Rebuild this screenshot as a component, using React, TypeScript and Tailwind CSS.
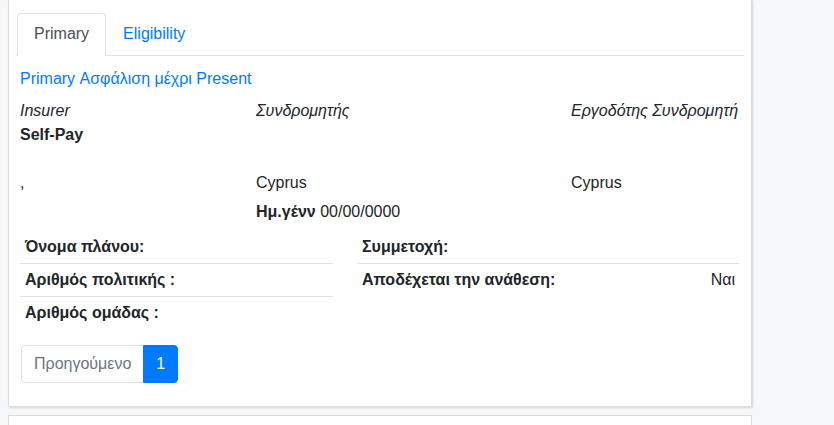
import React from 'react'

const leftRows = ['Όνομα πλάνου:', 'Αριθμός πολιτικής :', 'Αριθμός ομάδας :']
const rightRows: { label: string; value?: string }[] = [
  { label: 'Συμμετοχή:' },
  { label: 'Αποδέχεται την ανάθεση:', value: 'Ναι' },
]

export default function App() {
  return (
    <div
      className="min-h-[425px] bg-[#f7f8fa] pl-2 pr-[82px] text-base text-[#212529]"
      style={{ fontFamily: '"Liberation Sans", Arial, sans-serif' }}
    >
      <div className="-mt-px border border-[#dcdcdc] bg-white px-[7px] pb-[23px] pt-[13px] shadow-[1px_1px_2px_rgba(0,0,0,0.14)]">
        {/* tabs */}
        <div className="flex border-b border-[#dee2e6] leading-6">
          <div className="-mb-px ml-px rounded-t border border-[#dee2e6] border-b-white bg-white px-4 py-2 text-[#495057]">
            Primary
          </div>
          <div className="border border-transparent px-4 py-2 text-[#007bff]">Eligibility</div>
        </div>

        <div className="px-1 leading-6">
          <div className="mt-[11px] text-[#007bff]">Primary Ασφάλιση μέχρι Present</div>

          <div className="mt-[8px] grid grid-cols-[236px_315px_1fr]">
            <div>
              <div className="italic">Insurer</div>
              <div className="font-bold">Self-Pay</div>
              <div className="h-6" />
              <div>,</div>
            </div>
            <div>
              <div className="italic">Συνδρομητής</div>
              <div className="h-12" />
              <div>Cyprus</div>
              <div className="mt-[5px]">
                <span className="font-bold">Ημ.γένν</span> 00/00/0000
              </div>
            </div>
            <div>
              <div className="italic">Εργοδότης Συνδρομητή</div>
              <div className="h-12" />
              <div>Cyprus</div>
            </div>
          </div>

          <div className="mt-[7px] grid grid-cols-[313px_381px] gap-x-[25px]">
            <div>
              {leftRows.map((r, i) => (
                <div
                  key={r}
                  className={`px-[5px] py-1 font-bold ${i < leftRows.length - 1 ? 'border-b border-[#dee2e6]' : ''}`}
                >
                  {r}
                </div>
              ))}
            </div>
            <div>
              {rightRows.map((r, i) => (
                <div
                  key={r.label}
                  className={`flex justify-between px-1 py-1 ${i < rightRows.length - 1 ? 'border-b border-[#dee2e6]' : ''}`}
                >
                  <span className="font-bold">{r.label}</span>
                  <span>{r.value}</span>
                </div>
              ))}
            </div>
          </div>

          <div className="mt-4 ml-px flex">
            <div className="rounded-l border border-[#dee2e6] px-3 py-2 leading-5 text-[#6c757d]">
              Προηγούμενο
            </div>
            <div className="-ml-px rounded-r border border-[#007bff] bg-[#007bff] px-3 py-2 leading-5 text-white">
              1
            </div>
          </div>
        </div>
      </div>

      <div className="mt-2 h-4 border border-[#dcdcdc] bg-white" />
    </div>
  )
}
